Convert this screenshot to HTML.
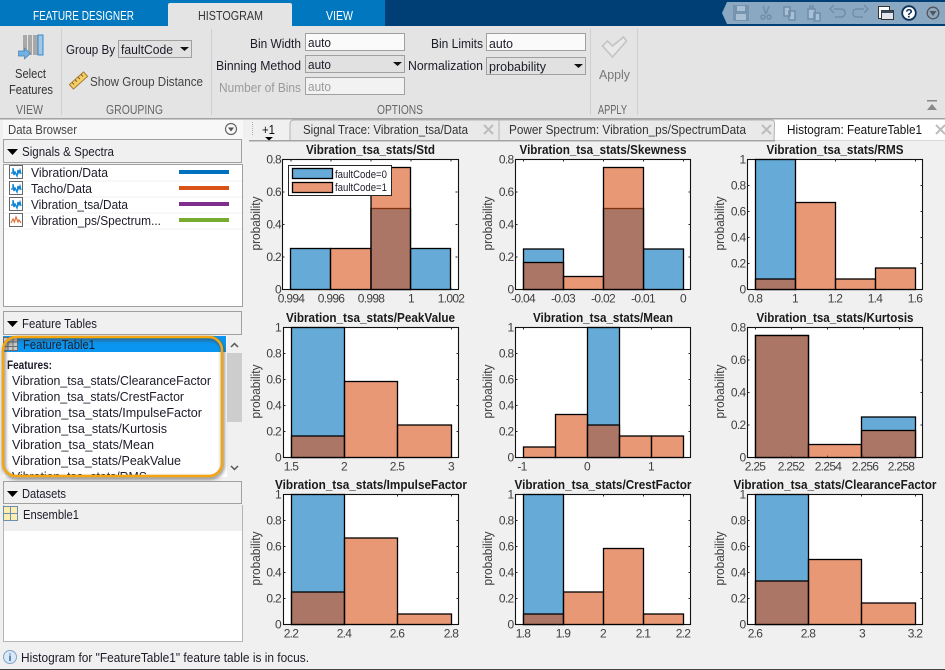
<!DOCTYPE html>
<html><head><meta charset="utf-8"><title>Histogram</title>
<style>
html,body{margin:0;padding:0;background:#f0f0f0;width:945px;height:670px;overflow:hidden}
svg{display:block}
text{font-family:"Liberation Sans",sans-serif;font-size:13px;fill:#1c1c28}
.g{fill:#555}.d{fill:#9a9a9a}.w{fill:#fff}
.ttl{font-weight:bold;font-size:13px;fill:#1a1a1a;text-anchor:middle}
.tk{font-size:12px;letter-spacing:-.7px;fill:#404040;text-anchor:middle}
.ty{font-size:12px;letter-spacing:-.7px;fill:#404040;text-anchor:end}
.yl{font-size:13px;fill:#404040;text-anchor:middle}
.ax{fill:#fff;stroke:#111;stroke-width:1.100}
.t{fill:none;stroke:#262626;stroke-width:1}
.b{fill:#0072bd;fill-opacity:.6;stroke:#000;stroke-width:1.300}
.o{fill:#d95319;fill-opacity:.6;stroke:#000;stroke-width:1.300}
.q{fill:none;stroke:#6f8eaa;stroke-width:1.500}
.f{fill:#f0f0f0;stroke:#a0a0a0;stroke-width:1}
.inp{fill:#fafafa;stroke:#a0a0a0;stroke-width:1}
.cb{fill:#e1e1e1;stroke:#a0a0a0;stroke-width:1}
.sp{stroke:#cfcfcf;stroke-width:1}
</style></head><body>
<svg xmlns="http://www.w3.org/2000/svg" width="945" height="670" viewBox="0 0 945 670">
<defs>
<filter id="bl" x="-10%" y="-10%" width="120%" height="120%"><feGaussianBlur stdDeviation="1.600"/></filter>
<clipPath id="cl"><rect x="3" y="352" width="224" height="124"/></clipPath>
<path id="t8" d="M0 32.500h2M0 65h2M0 97.500h2M173 32.500h2M173 65h2M173 97.500h2" fill="none" stroke="#262626"/>
<path id="t1" d="M0 26h2M0 52h2M0 78h2M0 104h2M173 26h2M173 52h2M173 78h2M173 104h2" fill="none" stroke="#262626"/>
<g id="sig"><rect x=".5" y=".5" width="13" height="13" fill="#fff" stroke="#666"/><path d="M2 8h2V3l1 7 1-3 2 4 1-6 1 3 1-3 1 4" fill="none" stroke="#0a80d0" stroke-width="1.300"/></g>
<g id="tri"><path d="M0 0h11L5.500 6z" fill="#000"/></g>
<g id="cross"><path d="M0 0l9 9M9 0l-9 9" stroke="#bcbcbc" stroke-width="2" fill="none"/></g>
</defs>

<!-- top bar -->
<rect width="945" height="26" fill="#003f75"/>
<rect width="385" height="26" fill="#0077be"/>
<path d="M168 26V5q0-2 2-2h120q2 0 2 2v21z" fill="#e4e4e4"/>
<text class="w" x="33" y="20" textLength="101" lengthAdjust="spacingAndGlyphs">FEATURE DESIGNER</text>
<text x="198" y="20" textLength="65" lengthAdjust="spacingAndGlyphs" style="fill:#333">HISTOGRAM</text>
<text class="w" x="326" y="20" textLength="27" lengthAdjust="spacingAndGlyphs">VIEW</text>

<!-- QAT -->
<path d="M722 13l5-11h218v22H727z" fill="#8ba8c3"/>
<rect x="733" y="5" width="16" height="16" fill="#7794ae"/><rect x="737" y="6" width="8" height="5" fill="#a9bfd3"/><rect x="736" y="14" width="10" height="6" fill="#a9bfd3"/>
<path d="M763 6l3 8M769 6l-3 8" class="q"/><circle cx="763" cy="17" r="2" class="q"/><circle cx="769" cy="17" r="2" class="q"/>
<path d="M784 7h6v9h-6zM789 11h6v9h-6z" class="q" style="fill:#a9bfd3"/>
<path d="M808 9h7v10h-7zM814 13h6v8h-6zM810 8h3v-2h-3z" class="q" style="fill:#a9bfd3"/>
<path d="M834 9h7q4 0 4 4t-4 4h-6M834 5l-4 4 4 4" class="q"/>
<path d="M864 9h-7q-4 0-4 4t4 4h6M864 5l4 4-4 4" class="q"/>
<rect x="878.500" y="6.500" width="11" height="12" fill="#fff" stroke="#333"/><rect x="881.500" y="10.500" width="12" height="9" fill="#dfe6ee" stroke="#333"/><rect x="881.500" y="10.500" width="12" height="2.500" fill="#3a4a5c"/>
<circle cx="909" cy="13" r="6.800" fill="#fff" stroke="#0d2f57" stroke-width="1.800"/>
<text x="909" y="17.500" style="font-size:12px;font-weight:bold;fill:#0d2f57;text-anchor:middle">?</text>
<circle cx="933" cy="13" r="5.800" fill="none" stroke="#555" stroke-width="1.300"/><path d="M929.500 11h7l-3.500 5z" fill="#555"/>

<!-- toolstrip -->
<rect y="26" width="945" height="92" fill="#e4e4e4"/>
<rect y="118" width="945" height="1.500" fill="#a3a3a3"/>
<path d="M61.500 29v86M211.500 29v86M590.500 29v86M637.500 29v86" class="sp"/>

<!-- select features icon -->
<rect x="23" y="35" width="15" height="20" fill="#a8a8a8"/><path d="M27.500 35v20M32.500 35v20" stroke="#e4e4e4"/>
<rect x="38" y="35" width="5" height="20" fill="#9cc9ea" stroke="#3a88c5"/>
<path d="M18.500 51h6v-3l6 5.500-6 5.500v-3h-6z" fill="#6fb1e4" stroke="#4a7fb0" stroke-width=".7"/>
<text x="15" y="78" textLength="31" lengthAdjust="spacingAndGlyphs" style="fill:#333">Select</text>
<text x="9" y="94" textLength="44" lengthAdjust="spacingAndGlyphs" style="fill:#333">Features</text>
<text x="16" y="114" textLength="27" lengthAdjust="spacingAndGlyphs" style="fill:#666">VIEW</text>

<text x="66" y="54" textLength="49" lengthAdjust="spacingAndGlyphs">Group By</text>
<rect class="cb" x="118.500" y="40.500" width="73" height="17"/>
<text x="121" y="54" textLength="52" lengthAdjust="spacingAndGlyphs">faultCode</text>
<path d="M180 47h9l-4.500 4z" fill="#111"/>
<g transform="translate(78.500,80.500) rotate(-42)"><rect x="-9.500" y="-3" width="19" height="6" fill="#f3cf6b" stroke="#a87a2a"/><path d="M-6-3v3M-2-3v3M2-3v3M6-3v3" stroke="#8a5a20"/></g>
<text x="90" y="86" textLength="113" lengthAdjust="spacingAndGlyphs" style="fill:#444">Show Group Distance</text>
<text x="106" y="114" textLength="57" lengthAdjust="spacingAndGlyphs" style="fill:#666">GROUPING</text>

<text x="250" y="48" textLength="51" lengthAdjust="spacingAndGlyphs">Bin Width</text>
<rect class="inp" x="305.500" y="33.500" width="99" height="17"/>
<text x="308" y="47" textLength="23" lengthAdjust="spacingAndGlyphs">auto</text>
<text x="216" y="70" textLength="85" lengthAdjust="spacingAndGlyphs">Binning Method</text>
<rect class="cb" x="305.500" y="55.500" width="99" height="17"/>
<text x="308" y="69" textLength="23" lengthAdjust="spacingAndGlyphs">auto</text>
<path d="M393 62h9l-4.500 4z" fill="#111"/>
<text class="d" x="219" y="92" textLength="82" lengthAdjust="spacingAndGlyphs">Number of Bins</text>
<rect x="305.500" y="77.500" width="99" height="17" fill="#f2f2f2" stroke="#a0a0a0"/>
<text class="d" x="308" y="91" textLength="23" lengthAdjust="spacingAndGlyphs">auto</text>
<text x="431" y="48" textLength="52" lengthAdjust="spacingAndGlyphs">Bin Limits</text>
<rect class="inp" x="486.500" y="33.500" width="99" height="17"/>
<text x="489" y="48" textLength="24" lengthAdjust="spacingAndGlyphs">auto</text>
<text x="408" y="70" textLength="75" lengthAdjust="spacingAndGlyphs">Normalization</text>
<rect class="cb" x="486.500" y="57.500" width="99" height="17"/>
<text x="489" y="71" textLength="57" lengthAdjust="spacingAndGlyphs">probability</text>
<path d="M574 64h9l-4.500 4z" fill="#111"/>
<text x="377" y="114" textLength="46" lengthAdjust="spacingAndGlyphs" style="fill:#666">OPTIONS</text>

<path d="M602.500 46l5-5 5 5 11-9 3 4-14 16z" fill="#e9e9e9" stroke="#c2c2c2" stroke-width="1.500"/>
<text x="599" y="79" textLength="31" lengthAdjust="spacingAndGlyphs" style="fill:#777">Apply</text>
<text x="598" y="114" textLength="29" lengthAdjust="spacingAndGlyphs" style="fill:#666">APPLY</text>
<rect x="927" y="100" width="10" height="1.500" fill="#888"/><path d="M927 110l5-6 5 6z" fill="#888"/>

<!-- tabs -->
<path d="M290 141v-17q0-4 4-4h205v21z" fill="#e9e9e9" stroke="#b4b4b4"/>
<path d="M499 141v-21h272q4 0 3.500 4l-.5 17z" fill="#e9e9e9" stroke="#b4b4b4"/>
<rect x="775" y="119.500" width="170" height="21" fill="#fff"/>
<rect x="249" y="140" width="526" height="1.500" fill="#a3a3a3"/>
<rect x="775" y="140" width="170" height="1" fill="#d8d8d8"/>
<path d="M252.500 122v14" stroke="#b0b0b0" stroke-dasharray="1 1"/>
<text x="262" y="134" textLength="13" lengthAdjust="spacingAndGlyphs" style="fill:#111">+1</text>
<path d="M265 137h8l-4 3.500z" fill="#000"/>
<text x="303" y="134" textLength="165" lengthAdjust="spacingAndGlyphs" style="fill:#333">Signal Trace: Vibration_tsa/Data</text>
<use href="#cross" x="484" y="125"/>
<text x="509" y="134" textLength="237" lengthAdjust="spacingAndGlyphs" style="fill:#333">Power Spectrum: Vibration_ps/SpectrumData</text>
<use href="#cross" x="762" y="125"/>
<text x="787" y="134" textLength="135" lengthAdjust="spacingAndGlyphs" style="fill:#111">Histogram: FeatureTable1</text>
<use href="#cross" x="936" y="125"/>

<!-- left panel -->
<rect x="3" y="120" width="240" height="19" fill="#f8f8f8"/>
<text x="8" y="134" textLength="69" lengthAdjust="spacingAndGlyphs" style="fill:#444">Data Browser</text>
<circle cx="231" cy="129" r="5.500" fill="none" stroke="#666" stroke-width="1.200"/><path d="M228 127.500h6l-3 4z" fill="#555"/>

<rect class="f" x="3.500" y="139.500" width="238" height="23"/>
<use href="#tri" x="7" y="149"/>
<text x="22" y="156" textLength="92" lengthAdjust="spacingAndGlyphs">Signals &amp; Spectra</text>
<rect x="3.500" y="164.500" width="239" height="142" fill="#fff" stroke="#a0a0a0"/>
<path d="M4 181h238M4 197h238M4 213h238M4 229h238" stroke="#f0f0f0"/>
<use href="#sig" x="9" y="165"/><use href="#sig" x="9" y="181"/><use href="#sig" x="9" y="197"/>
<g transform="translate(9,213)"><rect x=".5" y=".5" width="13" height="13" fill="#fff" stroke="#666"/><path d="M2 10l2-4 1.500 3 1.500-5 2 5 1-2 2 3" fill="none" stroke="#e0703a" stroke-width="1.200"/></g>
<text x="31" y="177" textLength="77" lengthAdjust="spacingAndGlyphs">Vibration/Data</text>
<text x="31" y="193" textLength="61" lengthAdjust="spacingAndGlyphs">Tacho/Data</text>
<text x="31" y="209" textLength="97" lengthAdjust="spacingAndGlyphs">Vibration_tsa/Data</text>
<text x="31" y="225" textLength="130" lengthAdjust="spacingAndGlyphs">Vibration_ps/Spectrum...</text>
<rect x="179" y="170" width="50" height="4" fill="#0072bd"/>
<rect x="179" y="186" width="50" height="4" fill="#d95319"/>
<rect x="179" y="202" width="50" height="4" fill="#7e2f8e"/>
<rect x="179" y="218" width="50" height="4" fill="#77ac30"/>

<rect class="f" x="3.500" y="311.500" width="238" height="23"/>
<use href="#tri" x="7" y="321"/>
<text x="22" y="328" textLength="75" lengthAdjust="spacingAndGlyphs">Feature Tables</text>
<rect x="3" y="336" width="224" height="141" fill="#fff"/>
<rect x="3" y="336" width="223" height="16" fill="#0a96f0"/>
<g stroke="#6c6c6c" fill="none"><rect x="3.500" y="337.500" width="14" height="13" fill="#c9c9c9"/><path d="M8 337v14M13 337v14M3 342h15M3 346.500h15"/></g>
<text x="23" y="349" textLength="72" lengthAdjust="spacingAndGlyphs">FeatureTable1</text>
<rect x="227" y="336" width="16" height="141" fill="#f0f0f0"/>
<rect x="227" y="353" width="15" height="69" fill="#cdcdcd"/>
<path d="M231 347l3.500-3.500 3.500 3.500M231 466l3.500 3.500 3.500-3.500" fill="none" stroke="#555" stroke-width="1.500"/>
<text x="7" y="369" textLength="45" lengthAdjust="spacingAndGlyphs" style="font-weight:bold;font-size:12px">Features:</text>
<text x="12" y="385" textLength="199" lengthAdjust="spacingAndGlyphs">Vibration_tsa_stats/ClearanceFactor</text>
<text x="12" y="401" textLength="172" lengthAdjust="spacingAndGlyphs">Vibration_tsa_stats/CrestFactor</text>
<text x="12" y="417" textLength="190" lengthAdjust="spacingAndGlyphs">Vibration_tsa_stats/ImpulseFactor</text>
<text x="12" y="433" textLength="155" lengthAdjust="spacingAndGlyphs">Vibration_tsa_stats/Kurtosis</text>
<text x="12" y="449" textLength="142" lengthAdjust="spacingAndGlyphs">Vibration_tsa_stats/Mean</text>
<text x="12" y="465" textLength="169" lengthAdjust="spacingAndGlyphs">Vibration_tsa_stats/PeakValue</text>
<text x="12" y="481" textLength="135" lengthAdjust="spacingAndGlyphs" clip-path="url(#cl)">Vibration_tsa_stats/RMS</text>
<rect x="4" y="339" width="219" height="139" rx="13" fill="none" stroke="#444" stroke-opacity=".6" stroke-width="3.500" filter="url(#bl)"/>
<rect x="3" y="337" width="219" height="139" rx="13" fill="none" stroke="#f5a50f" stroke-width="2.500"/>

<rect class="f" x="3.500" y="481.500" width="238" height="22"/>
<use href="#tri" x="7" y="491"/>
<text x="22" y="498" textLength="44" lengthAdjust="spacingAndGlyphs">Datasets</text>
<rect x="3.500" y="505.500" width="239" height="136" fill="#fff" stroke="#b5b5b5"/>
<rect x="4" y="505" width="238" height="26" fill="#efefef"/>
<g stroke="#6c8fb0" fill="none"><rect x="3.500" y="506.500" width="14" height="14" fill="#fbeeb0"/><path d="M10.500 506v15M3 513.500h15"/></g>
<text x="23" y="519" textLength="56" lengthAdjust="spacingAndGlyphs">Ensemble1</text>

<!-- status -->
<circle cx="10" cy="657" r="6.500" fill="#dbe8f6" stroke="#7fa4cc"/><text x="10" y="661" style="font-size:10px;font-weight:bold;fill:#2a62a8;text-anchor:middle">i</text>
<text x="21" y="662" textLength="288" lengthAdjust="spacingAndGlyphs">Histogram for "FeatureTable1" feature table is in focus.</text>
<rect y="669" width="945" height="1" fill="#444"/>

<!-- P1 Std -->
<rect class="ax" x="282.500" y="159.500" width="176" height="130"/>
<use href="#t8" x="282.500" y="159.500"/>
<path class="t" d="M291 289.500v-2M331 289.500v-2M371 289.500v-2M411 289.500v-2M451 289.500v-2M291 159.500v2M331 159.500v2M371 159.500v2M411 159.500v2M451 159.500v2"/>
<rect class="b" x="290.500" y="248.500" width="40" height="41"/><rect class="b" x="371" y="208.500" width="39.500" height="81"/><rect class="b" x="410.500" y="248.500" width="40" height="41"/>
<rect class="o" x="330.500" y="248.500" width="40.500" height="41"/><rect class="o" x="371" y="167.500" width="39.500" height="122"/>
<rect x="288.500" y="165.500" width="103" height="30" fill="#fff" stroke="#262626"/>
<rect class="b" x="292.500" y="168.500" width="40" height="10"/><rect class="o" x="292.500" y="182.500" width="40" height="10"/>
<text x="335" y="178" textLength="52" lengthAdjust="spacingAndGlyphs" style="font-size:11px">faultCode=0</text>
<text x="335" y="191" textLength="52" lengthAdjust="spacingAndGlyphs" style="font-size:11px">faultCode=1</text>
<text class="ttl" x="370.500" y="154" textLength="129" lengthAdjust="spacingAndGlyphs">Vibration_tsa_stats/Std</text>
<text class="yl" transform="translate(260,223.500) rotate(-90)" textLength="54" lengthAdjust="spacingAndGlyphs">probability</text>
<text class="ty" x="281" y="293.500">0</text><text class="ty" x="281" y="261">0.2</text><text class="ty" x="281" y="228.500">0.4</text><text class="ty" x="281" y="196">0.6</text><text class="ty" x="281" y="163.500">0.8</text>
<text class="tk" x="291" y="302.500">0.994</text><text class="tk" x="331" y="302.500">0.996</text><text class="tk" x="371" y="302.500">0.998</text><text class="tk" x="411" y="302.500">1</text><text class="tk" x="451" y="302.500">1.002</text>

<!-- P2 Skewness -->
<rect class="ax" x="515.500" y="159.500" width="175" height="130"/>
<use href="#t8" x="515.500" y="159.500"/>
<path class="t" d="M523.500 289.500v-2M563.500 289.500v-2M603.500 289.500v-2M643.500 289.500v-2M683.500 289.500v-2M523.500 159.500v2M563.500 159.500v2M603.500 159.500v2M643.500 159.500v2M683.500 159.500v2"/>
<rect class="b" x="523.500" y="249" width="40" height="40.500"/><rect class="b" x="603.500" y="208.500" width="40" height="81"/><rect class="b" x="643.500" y="249" width="40" height="40.500"/>
<rect class="o" x="523.500" y="262.500" width="40" height="27"/><rect class="o" x="563.500" y="276.500" width="40" height="13"/><rect class="o" x="603.500" y="167.500" width="40" height="122"/>
<text class="ttl" x="603" y="154" textLength="167" lengthAdjust="spacingAndGlyphs">Vibration_tsa_stats/Skewness</text>
<text class="yl" transform="translate(492,223.500) rotate(-90)" textLength="54" lengthAdjust="spacingAndGlyphs">probability</text>
<text class="ty" x="513.500" y="293.500">0</text><text class="ty" x="513.500" y="261">0.2</text><text class="ty" x="513.500" y="228.500">0.4</text><text class="ty" x="513.500" y="196">0.6</text><text class="ty" x="513.500" y="163.500">0.8</text>
<text class="tk" x="523" y="302.500">-0.04</text><text class="tk" x="563" y="302.500">-0.03</text><text class="tk" x="603" y="302.500">-0.02</text><text class="tk" x="643" y="302.500">-0.01</text><text class="tk" x="683" y="302.500">0</text>

<!-- P3 RMS -->
<rect class="ax" x="747.500" y="159.500" width="175" height="130"/>
<use href="#t1" x="747.500" y="159.500"/>
<path class="t" d="M755.500 289.500v-2M795.500 289.500v-2M835.500 289.500v-2M875.500 289.500v-2M915.500 289.500v-2M755.500 159.500v2M795.500 159.500v2M835.500 159.500v2M875.500 159.500v2M915.500 159.500v2"/>
<rect class="b" x="755.500" y="159.500" width="40" height="130"/>
<rect class="o" x="755.500" y="279" width="40" height="10.500"/><rect class="o" x="795.500" y="202.500" width="40" height="87"/><rect class="o" x="835.500" y="279" width="40" height="10.500"/><rect class="o" x="875.500" y="268" width="40" height="21.500"/>
<text class="ttl" x="835" y="154" textLength="137" lengthAdjust="spacingAndGlyphs">Vibration_tsa_stats/RMS</text>
<text class="yl" transform="translate(724,223.500) rotate(-90)" textLength="54" lengthAdjust="spacingAndGlyphs">probability</text>
<text class="ty" x="745.500" y="293.500">0</text><text class="ty" x="745.500" y="267.500">0.2</text><text class="ty" x="745.500" y="241.500">0.4</text><text class="ty" x="745.500" y="215.500">0.6</text><text class="ty" x="745.500" y="189.500">0.8</text><text class="ty" x="745.500" y="163.500">1</text>
<text class="tk" x="755" y="302.500">0.8</text><text class="tk" x="795" y="302.500">1</text><text class="tk" x="835" y="302.500">1.2</text><text class="tk" x="875" y="302.500">1.4</text><text class="tk" x="915" y="302.500">1.6</text>

<!-- P4 PeakValue -->
<rect class="ax" x="283.500" y="327.500" width="175" height="130"/>
<use href="#t1" x="283.500" y="327.500"/>
<path class="t" d="M291.500 457.500v-2M344.500 457.500v-2M397.500 457.500v-2M451.500 457.500v-2M291.500 327.500v2M344.500 327.500v2M397.500 327.500v2M451.500 327.500v2"/>
<rect class="b" x="291.500" y="327.500" width="53" height="130"/>
<rect class="o" x="291.500" y="436" width="53" height="21.500"/><rect class="o" x="344.500" y="381.500" width="53" height="76"/><rect class="o" x="397.500" y="425" width="54" height="32.500"/>
<text class="ttl" x="370.500" y="322" textLength="169" lengthAdjust="spacingAndGlyphs">Vibration_tsa_stats/PeakValue</text>
<text class="yl" transform="translate(260,391.500) rotate(-90)" textLength="54" lengthAdjust="spacingAndGlyphs">probability</text>
<text class="ty" x="281" y="461.500">0</text><text class="ty" x="281" y="435.500">0.2</text><text class="ty" x="281" y="409.500">0.4</text><text class="ty" x="281" y="383.500">0.6</text><text class="ty" x="281" y="357.500">0.8</text><text class="ty" x="281" y="331.500">1</text>
<text class="tk" x="291" y="470.500">1.5</text><text class="tk" x="344" y="470.500">2</text><text class="tk" x="397" y="470.500">2.5</text><text class="tk" x="451" y="470.500">3</text>

<!-- P5 Mean -->
<rect class="ax" x="515.500" y="327.500" width="175" height="130"/>
<use href="#t1" x="515.500" y="327.500"/>
<path class="t" d="M523.500 457.500v-2M587.500 457.500v-2M651.500 457.500v-2M523.500 327.500v2M587.500 327.500v2M651.500 327.500v2"/>
<rect class="b" x="587.500" y="327.500" width="32" height="130"/>
<rect class="o" x="523.500" y="447" width="32" height="10.500"/><rect class="o" x="555.500" y="414.500" width="32" height="43"/><rect class="o" x="587.500" y="425" width="32" height="32.500"/><rect class="o" x="619.500" y="436" width="32" height="21.500"/><rect class="o" x="651.500" y="436" width="32" height="21.500"/>
<text class="ttl" x="603" y="322" textLength="140" lengthAdjust="spacingAndGlyphs">Vibration_tsa_stats/Mean</text>
<text class="yl" transform="translate(492,391.500) rotate(-90)" textLength="54" lengthAdjust="spacingAndGlyphs">probability</text>
<text class="ty" x="513.500" y="461.500">0</text><text class="ty" x="513.500" y="435.500">0.2</text><text class="ty" x="513.500" y="409.500">0.4</text><text class="ty" x="513.500" y="383.500">0.6</text><text class="ty" x="513.500" y="357.500">0.8</text><text class="ty" x="513.500" y="331.500">1</text>
<text class="tk" x="522" y="470.500">-1</text><text class="tk" x="587" y="470.500">0</text><text class="tk" x="651" y="470.500">1</text>

<!-- P6 Kurtosis -->
<rect class="ax" x="747.500" y="327.500" width="175" height="130"/>
<use href="#t8" x="747.500" y="327.500"/>
<path class="t" d="M755.500 457.500v-2M791.500 457.500v-2M827.500 457.500v-2M863.500 457.500v-2M899.500 457.500v-2M755.500 327.500v2M791.500 327.500v2M827.500 327.500v2M863.500 327.500v2M899.500 327.500v2"/>
<rect class="b" x="755.500" y="335.500" width="53" height="122"/><rect class="b" x="861.500" y="417" width="54" height="40.500"/>
<rect class="o" x="755.500" y="335.500" width="53" height="122"/><rect class="o" x="808.500" y="444.500" width="53" height="13"/><rect class="o" x="861.500" y="430.500" width="54" height="27"/>
<text class="ttl" x="835" y="322" textLength="157" lengthAdjust="spacingAndGlyphs">Vibration_tsa_stats/Kurtosis</text>
<text class="yl" transform="translate(724,391.500) rotate(-90)" textLength="54" lengthAdjust="spacingAndGlyphs">probability</text>
<text class="ty" x="745.500" y="461.500">0</text><text class="ty" x="745.500" y="429">0.2</text><text class="ty" x="745.500" y="396.500">0.4</text><text class="ty" x="745.500" y="364">0.6</text><text class="ty" x="745.500" y="331.500">0.8</text>
<text class="tk" x="755" y="470.500">2.25</text><text class="tk" x="791" y="470.500">2.252</text><text class="tk" x="828" y="470.500">2.254</text><text class="tk" x="865" y="470.500">2.256</text><text class="tk" x="901" y="470.500">2.258</text>

<!-- P7 ImpulseFactor -->
<rect class="ax" x="283.500" y="494.500" width="175" height="130"/>
<use href="#t1" x="283.500" y="494.500"/>
<path class="t" d="M291.500 624.500v-2M344.500 624.500v-2M397.500 624.500v-2M451.500 624.500v-2M291.500 494.500v2M344.500 494.500v2M397.500 494.500v2M451.500 494.500v2"/>
<rect class="b" x="291.500" y="494.500" width="53" height="130"/>
<rect class="o" x="291.500" y="592" width="53" height="32.500"/><rect class="o" x="344.500" y="538" width="53" height="86.500"/><rect class="o" x="397.500" y="614" width="54" height="10.500"/>
<text class="ttl" x="371" y="489" textLength="192" lengthAdjust="spacingAndGlyphs">Vibration_tsa_stats/ImpulseFactor</text>
<text class="yl" transform="translate(260,558.500) rotate(-90)" textLength="54" lengthAdjust="spacingAndGlyphs">probability</text>
<text class="ty" x="281" y="628.500">0</text><text class="ty" x="281" y="602.500">0.2</text><text class="ty" x="281" y="576.500">0.4</text><text class="ty" x="281" y="550.500">0.6</text><text class="ty" x="281" y="524.500">0.8</text><text class="ty" x="281" y="498.500">1</text>
<text class="tk" x="291" y="637.500">2.2</text><text class="tk" x="344" y="637.500">2.4</text><text class="tk" x="397" y="637.500">2.6</text><text class="tk" x="451" y="637.500">2.8</text>

<!-- P8 CrestFactor -->
<rect class="ax" x="515.500" y="494.500" width="175" height="130"/>
<use href="#t1" x="515.500" y="494.500"/>
<path class="t" d="M523.500 624.500v-2M563.500 624.500v-2M603.500 624.500v-2M643.500 624.500v-2M683.500 624.500v-2M523.500 494.500v2M563.500 494.500v2M603.500 494.500v2M643.500 494.500v2M683.500 494.500v2"/>
<rect class="b" x="523.500" y="494.500" width="40" height="130"/>
<rect class="o" x="523.500" y="614" width="40" height="10.500"/><rect class="o" x="563.500" y="592" width="40" height="32.500"/><rect class="o" x="603.500" y="548.500" width="40" height="76"/><rect class="o" x="643.500" y="614" width="40" height="10.500"/>
<text class="ttl" x="603" y="489" textLength="177" lengthAdjust="spacingAndGlyphs">Vibration_tsa_stats/CrestFactor</text>
<text class="yl" transform="translate(492,558.500) rotate(-90)" textLength="54" lengthAdjust="spacingAndGlyphs">probability</text>
<text class="ty" x="513.500" y="628.500">0</text><text class="ty" x="513.500" y="602.500">0.2</text><text class="ty" x="513.500" y="576.500">0.4</text><text class="ty" x="513.500" y="550.500">0.6</text><text class="ty" x="513.500" y="524.500">0.8</text><text class="ty" x="513.500" y="498.500">1</text>
<text class="tk" x="523" y="637.500">1.8</text><text class="tk" x="563" y="637.500">1.9</text><text class="tk" x="603" y="637.500">2</text><text class="tk" x="643" y="637.500">2.1</text><text class="tk" x="683" y="637.500">2.2</text>

<!-- P9 ClearanceFactor -->
<rect class="ax" x="747.500" y="494.500" width="175" height="130"/>
<use href="#t1" x="747.500" y="494.500"/>
<path class="t" d="M755.500 624.500v-2M808.500 624.500v-2M861.500 624.500v-2M915.500 624.500v-2M755.500 494.500v2M808.500 494.500v2M861.500 494.500v2M915.500 494.500v2"/>
<rect class="b" x="755.500" y="494.500" width="53" height="130"/>
<rect class="o" x="755.500" y="581" width="53" height="43.500"/><rect class="o" x="808.500" y="559.500" width="53" height="65"/><rect class="o" x="861.500" y="603" width="54" height="21.500"/>
<text class="ttl" x="835" y="489" textLength="203" lengthAdjust="spacingAndGlyphs">Vibration_tsa_stats/ClearanceFactor</text>
<text class="yl" transform="translate(724,558.500) rotate(-90)" textLength="54" lengthAdjust="spacingAndGlyphs">probability</text>
<text class="ty" x="745.500" y="628.500">0</text><text class="ty" x="745.500" y="602.500">0.2</text><text class="ty" x="745.500" y="576.500">0.4</text><text class="ty" x="745.500" y="550.500">0.6</text><text class="ty" x="745.500" y="524.500">0.8</text><text class="ty" x="745.500" y="498.500">1</text>
<text class="tk" x="755" y="637.500">2.6</text><text class="tk" x="808" y="637.500">2.8</text><text class="tk" x="862" y="637.500">3</text><text class="tk" x="915" y="637.500">3.2</text>
</svg>
</body></html>
